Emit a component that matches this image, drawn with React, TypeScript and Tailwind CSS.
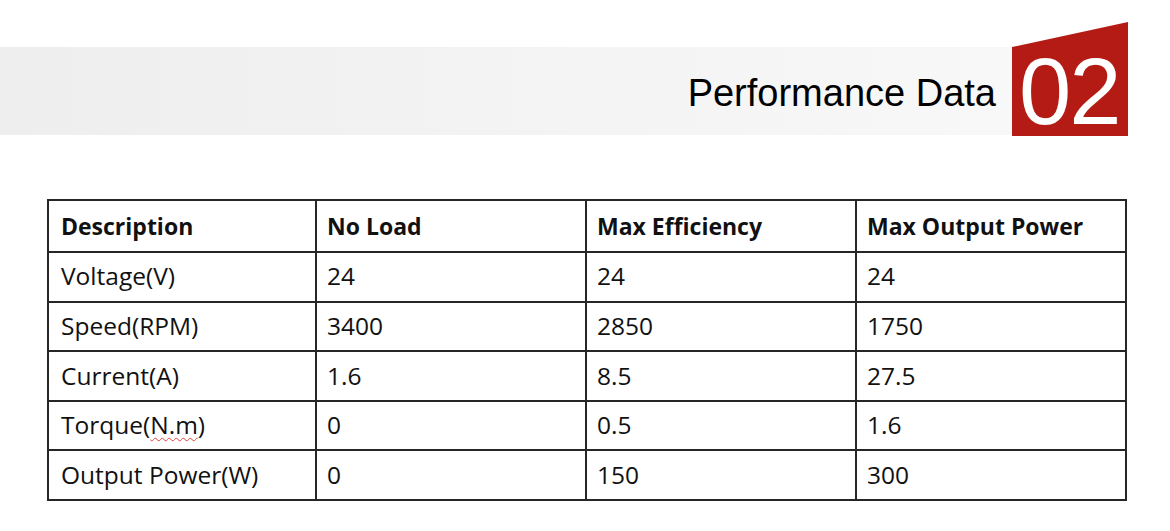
const headers = ["Description", "No Load", "Max Efficiency", "Max Output Power"];

const rows: { label: React.ReactNode; values: string[] }[] = [
  { label: "Voltage(V)", values: ["24", "24", "24"] },
  { label: "Speed(RPM)", values: ["3400", "2850", "1750"] },
  { label: "Current(A)", values: ["1.6", "8.5", "27.5"] },
  {
    label: (
      <>
        Torque(
        <span className="underline decoration-wavy decoration-[#e0443c] decoration-1 underline-offset-[3px]">
          N.m
        </span>
        )
      </>
    ),
    values: ["0", "0.5", "1.6"],
  },
  { label: "Output Power(W)", values: ["0", "150", "300"] },
];

const SectionHeader = () => (
  <div className="flex items-end pt-[22px]">
    <div className="flex-1 h-[88px] mb-px flex items-center justify-end pr-[16px] pt-[3px] bg-gradient-to-r from-[#eeeeee] to-[#f8f8f8]">
      <h1 className="text-[38px] leading-none text-black font-['Liberation_Sans',Arial,sans-serif]">
        Performance Data
      </h1>
    </div>
    <div className="w-[116px] h-[114px] bg-[#b51b15] [clip-path:polygon(0_25px,100%_0,100%_100%,0_100%)] pt-[23px] pl-[7px]">
      <span className="block text-[94px] leading-none text-white tracking-[-2px] font-['Liberation_Sans',Arial,sans-serif]">
        02
      </span>
    </div>
    <div className="w-[42px]" />
  </div>
);

const App = () => {
  return (
    <div className="w-[1170px] h-[531px] bg-white overflow-hidden font-['Open_Sans',sans-serif]">
      <SectionHeader />

      <div className="mt-[63px] ml-[47px]">
        <table className="w-[1078px] border-collapse text-[24.5px] text-[#111] table-fixed">
          <colgroup>
            <col className="w-[268px]" />
            <col className="w-[270px]" />
            <col className="w-[270px]" />
            <col className="w-[270px]" />
          </colgroup>
          <thead>
            <tr>
              {headers.map((h, i) => (
                <th
                  key={h}
                  className={`h-[52px] border-2 border-[#262626] pr-[10px] text-left text-[23px] font-bold ${
                    i === 0 ? "pl-[12px]" : "pl-[10px]"
                  }`}
                >
                  {h}
                </th>
              ))}
            </tr>
          </thead>
          <tbody>
            {rows.map((row, i) => (
              <tr key={i}>
                <td className="h-[49.6px] border-2 border-[#262626] pl-[12px] pr-[10px]">
                  {row.label}
                </td>
                {row.values.map((v, j) => (
                  <td key={j} className="h-[49.6px] border-2 border-[#262626] px-[10px]">
                    {v}
                  </td>
                ))}
              </tr>
            ))}
          </tbody>
        </table>
      </div>
    </div>
  );
};

export default App;
